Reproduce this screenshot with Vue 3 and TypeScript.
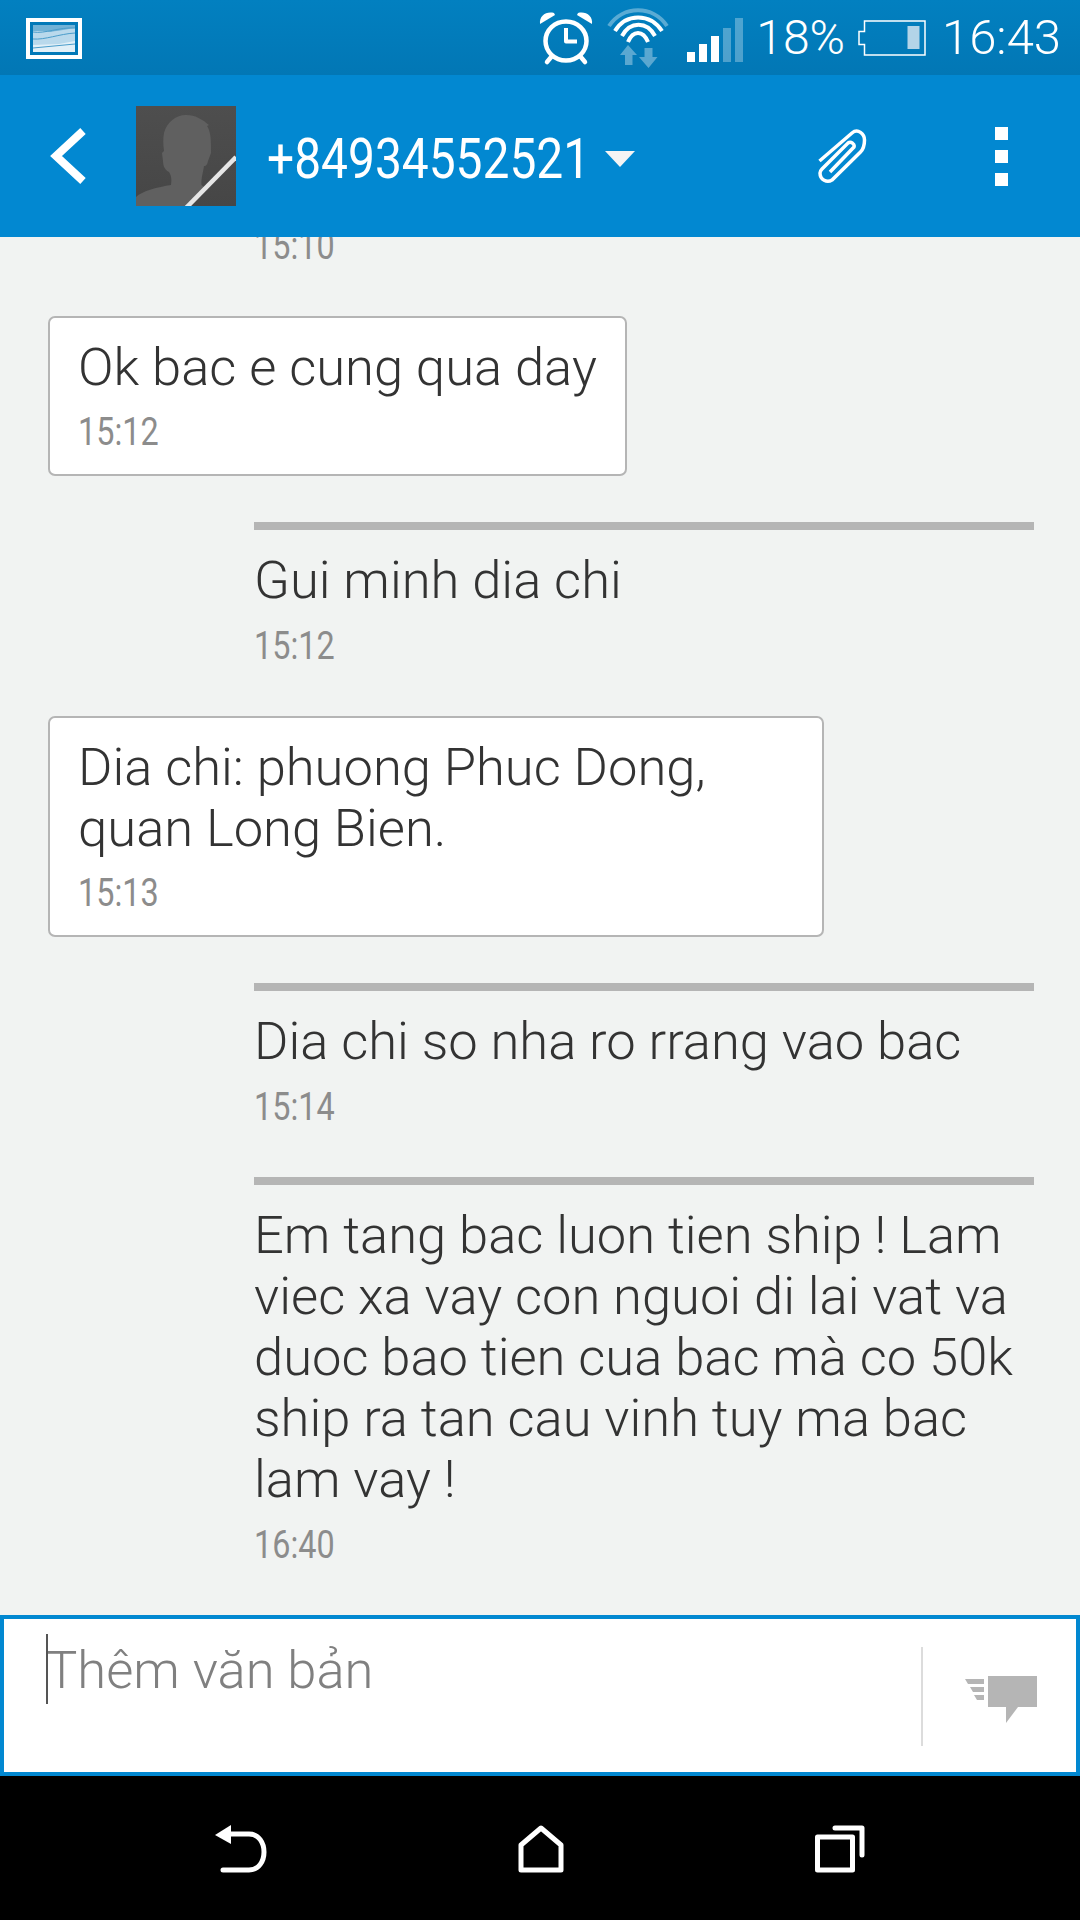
<script setup lang="ts">
type Message = { id: number; side: "in" | "out"; text: string; time: string };

const messages: Message[] = [
  { id: 1, side: "out", text: "", time: "15:10" },
  { id: 2, side: "in", text: "Ok bac e cung qua day", time: "15:12" },
  { id: 3, side: "out", text: "Gui minh dia chi", time: "15:12" },
  { id: 4, side: "in", text: "Dia chi: phuong Phuc Dong, quan Long Bien.", time: "15:13" },
  { id: 5, side: "out", text: "Dia chi so nha ro rrang vao bac", time: "15:14" },
  {
    id: 6,
    side: "out",
    text: "Em tang bac luon tien ship ! Lam viec xa vay con nguoi di lai vat va duoc bao tien cua bac mà co 50k ship ra tan cau vinh tuy ma bac lam vay !",
    time: "16:40",
  },
];
</script>

<template>
  <div class="phone">
    <div class="status">
      <svg class="notif" width="56" height="75" viewBox="0 0 56 75">
        <rect x="2" y="20" width="52" height="37" fill="#0279b8" stroke="#fff" stroke-width="4" />
        <rect x="7" y="25" width="42" height="27" fill="#e2f0f8" />
        <path d="M7 25h42v5l-12 1-12 1-18-1z" fill="#72b2d6" />
        <path d="M7 31l18 1 12-2 12-2v13l-16 3-26 1z" fill="#b9d9ec" />
        <path d="M7 32c12 2 26-5 42-4M7 39c12 1 26-5 42-6M7 48c14-1 28-3 42-4" fill="none" stroke="#4a9dcb" stroke-width="1" />
      </svg>
      <div class="status-right">
        <svg width="54" height="75" viewBox="0 0 54 75" fill="none" stroke="#fff">
          <ellipse cx="27" cy="41" rx="20.500" ry="19.500" stroke-width="4.500" />
          <path d="M27 28v13.500h11" stroke-width="4" stroke-linejoin="round" />
          <path d="M1 24c-1-8 6-13 14-11l1 2z" fill="#fff" stroke="none" />
          <path d="M53 24c1-8-6-13-14-11l-1 2z" fill="#fff" stroke="none" />
          <path d="M13 56l-5 6M41 56l5 6" stroke-width="4.500" stroke-linecap="round" />
        </svg>
        <svg class="wifi" width="63" height="75" viewBox="0 0 63 75" fill="none" stroke="#fff">
          <path d="M2 26C16 5 46 5 60 26" stroke-opacity=".35" stroke-width="4" />
          <path d="M8 31C19 13 43 13 55 31" stroke-width="4" />
          <path d="M15 36C23 21 40 21 48 36" stroke-width="4" />
          <path d="M21 42C26 30 36 30 41 42" stroke-width="4" />
          <path d="M21 45l9 10h-4.500v10h-7.500v-10h-5z" fill="#fff" fill-opacity=".35" stroke="none" />
          <path d="M41.500 68l-9.500-11h5.500v-9h8v9h5z" fill="#fff" fill-opacity=".35" stroke="none" />
        </svg>
        <svg class="signal" width="56" height="75" viewBox="0 0 56 75" fill="#fff">
          <rect x="0" y="52" width="8" height="10" />
          <rect x="12" y="44" width="8" height="18" />
          <rect x="24" y="36" width="8" height="26" />
          <rect x="36" y="28" width="8" height="34" opacity=".3" />
          <rect x="48" y="18" width="8" height="44" opacity=".3" />
        </svg>
        <span class="pct">18%</span>
        <svg class="battery" width="68" height="75" viewBox="0 0 68 75" fill="none" stroke="#fff" stroke-width="1.500">
          <path d="M6.500 21h60.500v34h-60.500v-10.500h-5.500v-13h5.500z" />
          <rect x="49.500" y="26" width="12" height="23" fill="#b3d4e8" stroke="none" />
        </svg>
        <span class="clock">16:43</span>
      </div>
    </div>

    <header class="bar">
      <svg class="back" width="36" height="56" viewBox="0 0 36 56" fill="none" stroke="#fff" stroke-width="8">
        <path d="M33 3L6 28l27 25" />
      </svg>
      <svg class="avatar" width="100" height="100" viewBox="0 0 100 100">
        <defs>
          <linearGradient id="avatarBg" x1="0" y1="0" x2="0" y2="1">
            <stop offset="0" stop-color="#4e4e4e" />
            <stop offset="1" stop-color="#464646" />
          </linearGradient>
        </defs>
        <rect width="100" height="100" fill="url(#avatarBg)" />
        <path d="M0 100V91C6 85 22 81 35 79C36 73 35 69 33 66C29 64 27 60 27 55L26 47L28 45C27 38 27 32 28 27C31 16 40 9 50 9C60 9 67 14 73 19L71 20C75 26 75 34 75 47L72 55C71 60 69 60 68 60C67 67 65 72 65.500 79L69 82L50 100z" fill="#606060" />
        <path d="M100 51L50 102" stroke="#e6e6e6" stroke-width="4.500" />
      </svg>
      <div class="title">+84934552521</div>
      <svg class="caret" width="30" height="16" viewBox="0 0 30 16"><path d="M0 0h30L15 16z" fill="#f4f4f4" /></svg>
      <svg class="clip" width="52" height="56" viewBox="0 0 52 56" fill="none" stroke="#fff" stroke-width="3.500">
        <path d="M1.500 33L34 5c6-5 12.500 1 12.500 7 0 5-1 9-4 12L14 52c-5 3-12 0-12-7 0-2 1-3 2-4L30 15c3-2 7 1 6 4L12 44" />
      </svg>
      <div class="dots"><i></i><i></i><i></i></div>
    </header>

    <main class="list">
      <div v-for="m in messages" :key="m.id" class="msg" :class="m.side">
        <div v-if="m.text" class="text">{{ m.text }}</div>
        <div class="time">{{ m.time }}</div>
      </div>
    </main>

    <div class="composer">
      <div class="field"><span class="cursor"></span>Thêm văn bản</div>
      <div class="send">
        <svg width="72" height="46" viewBox="0 0 72 46" fill="#b5b5b5">
          <path d="M23 0h49v31H53L41 47V31H23z" />
          <path d="M0 3h19v5H3zM5 11h14v5H8zM9 19h10v5H12z" />
        </svg>
      </div>
    </div>

    <nav class="nav">
      <svg width="52" height="48" viewBox="0 0 52 48" fill="none" stroke="#fff" stroke-width="5" stroke-linecap="round">
        <path d="M0 10L16 0v19z" fill="#fff" stroke="none" />
        <path d="M14 9h20c20 0 20 36 0 36H8" />
      </svg>
      <svg width="46" height="48" viewBox="0 0 46 48" fill="none" stroke="#fff" stroke-width="5" stroke-linejoin="round">
        <path d="M23 3L3 20v25h40V20z" />
      </svg>
      <svg width="50" height="48" viewBox="0 0 50 48" fill="none" stroke="#fff" stroke-width="5" stroke-linecap="round" stroke-linejoin="round">
        <rect x="2.500" y="12" width="35" height="33" />
        <path d="M20 3h27v27" />
      </svg>
    </nav>
  </div>
</template>

<style scoped>
.phone {
  width: 1080px;
  height: 1920px;
  display: flex;
  flex-direction: column;
  background: #f1f3f2;
  font-family: Roboto, "Liberation Sans", sans-serif;
  overflow: hidden;
}

.status {
  height: 75px;
  flex: none;
  display: flex;
  align-items: center;
  justify-content: space-between;
  padding: 0 19px 0 26px;
  background: linear-gradient(#0280c0, #0277b5);
  color: #fff;
}
.status svg {
  display: block;
}
.status-right {
  display: flex;
  align-items: center;
}
.wifi {
  margin-left: 14px;
}
.signal {
  margin-left: 17px;
}
.pct {
  margin-left: 13px;
  font-size: 48px;
  font-weight: 300;
  line-height: 75px;
}
.battery {
  margin-left: 13px;
}
.clock {
  margin-left: 16px;
  font-size: 49px;
  font-weight: 300;
  line-height: 75px;
}

.bar {
  height: 162px;
  flex: none;
  display: flex;
  align-items: center;
  background: #0288d1;
  color: #fff;
  padding-left: 50px;
}
.avatar {
  margin-left: 50px;
  display: block;
}
.title {
  margin-left: 31px;
  margin-top: 6px;
  width: 322px;
  font-size: 56px;
  white-space: nowrap;
  font-weight: 400;
  transform: scaleX(0.855);
  transform-origin: left center;
}
.caret {
  margin-left: 16px;
  margin-top: 6px;
}
.clip {
  margin-left: 183px;
}
.dots {
  margin-left: 125px;
  width: 13px;
  display: flex;
  flex-direction: column;
  gap: 10px;
}
.dots i {
  display: block;
  height: 13px;
  background: #fff;
}

.list {
  flex: 1;
  min-height: 0;
  overflow: hidden;
  display: flex;
  flex-direction: column;
  justify-content: flex-end;
  align-items: flex-start;
  gap: 47px;
  padding: 0 46px 47px 48px;
  color: #333;
}
.msg {
  flex: none;
}
.msg.in {
  box-sizing: border-box;
  max-width: 776px;
  margin-bottom: -1px;
  padding: 19px 28px 22px 28px;
  background: #fff;
  border: 2px solid #b5b5b5;
  border-radius: 7px;
}
.msg.in .time {
  margin-top: 14px;
}
.msg.out {
  box-sizing: border-box;
  width: 780px;
  margin-left: 206px;
  padding: 20px 0 3px;
  border-top: 8px solid #b5b5b5;
}
.text {
  font-size: 52.5px;
  line-height: 61px;
  font-weight: 300;
}
.time {
  margin-top: 15px;
  height: 40px;
  font-size: 39px;
  line-height: 40px;
  color: #8c8c8c;
  transform: scaleX(0.83);
  transform-origin: left center;
}

.composer {
  box-sizing: border-box;
  height: 161px;
  flex: none;
  display: flex;
  background: #fff;
  border: 4px solid #0288d1;
}
.field {
  flex: 1;
  position: relative;
  padding: 21px 0 0 42px;
  font-size: 52.5px;
  line-height: 61px;
  font-weight: 300;
  color: #808080;
}
.cursor {
  position: absolute;
  left: 42px;
  top: 15px;
  width: 1.500px;
  height: 70px;
  background: #555;
}
.send {
  box-sizing: border-box;
  width: 155px;
  height: 99px;
  margin-top: 28px;
  padding: 29px 0 0 42px;
  border-left: 2px solid #dcdcdc;
}
.send svg {
  display: block;
  overflow: visible;
}

.nav {
  height: 144px;
  box-sizing: border-box;
  flex: none;
  display: flex;
  align-items: flex-start;
  justify-content: space-between;
  background: #000;
  padding: 49px 215px 0;
}
.nav svg {
  display: block;
  overflow: visible;
}
</style>

<style>
html,
body {
  margin: 0;
  padding: 0;
}
</style>
